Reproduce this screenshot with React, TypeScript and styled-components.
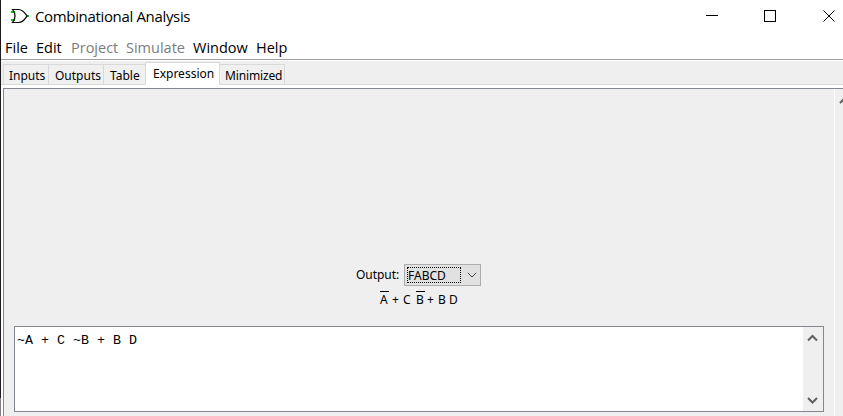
import React from "react";
import styled, { createGlobalStyle } from "styled-components";

const Global = createGlobalStyle`
  * { box-sizing: border-box; }
  body { margin: 0; overflow: hidden; background: #fff; }
`;

const Window = styled.div`
  width: 843px;
  height: 416px;
  display: flex;
  flex-direction: column;
  overflow: hidden;
  padding-left: 1px;
  background: linear-gradient(#1c1a1c 398px, #858085 398px) 0 0 / 1px 100% no-repeat #fff;
  color: #000;
  font-family: "Noto Sans", "Open Sans", sans-serif;
`;

const TitleBar = styled.header`
  height: 36px;
  flex: none;
  display: flex;
  align-items: flex-start;
  padding-left: 10px;
`;

const GateIcon = styled.svg`
  margin-top: 8px;
  width: 20px;
  height: 16px;
  flex: none;
`;

const Title = styled.h1`
  margin: 4px auto 0 4px;
  font-family: "Open Sans", sans-serif;
  font-size: 15px;
  font-weight: 400;
  line-height: 24px;
  letter-spacing: -0.34px;
  white-space: nowrap;
`;

const Controls = styled.svg`
  margin-top: 9px;
  width: 137px;
  height: 14px;
  flex: none;
`;

const MenuBar = styled.nav`
  height: 24px;
  flex: none;
  display: flex;
  border-bottom: 1px solid #a0a0a0;
  padding-left: 4px;
`;

const MenuItem = styled.span<{ $width: number; $disabled?: boolean }>`
  width: ${(p) => p.$width}px;
  flex: none;
  font-family: "Open Sans", sans-serif;
  font-size: 14.5px;
  line-height: 24px;
  white-space: nowrap;
  color: ${(p) => (p.$disabled ? "#7c7c7c" : "#000")};
`;

const TabStrip = styled.div`
  height: 24px;
  flex: none;
  display: flex;
  align-items: flex-end;
  margin-top: 1px;
  padding-left: 2px;
  background: #efefef;
  box-shadow: inset 0 -1px #d9d9d9;
`;

const Tab = styled.div<{ $width: number; $inset?: number; $active?: boolean }>`
  width: ${(p) => p.$width}px;
  height: ${(p) => (p.$active ? 23 : 21)}px;
  flex: none;
  border: 1px solid #d9d9d9;
  border-right-width: ${(p) => (p.$active ? 1 : 0)}px;
  border-bottom-color: ${(p) => (p.$active ? "#fff" : "#d9d9d9")};
  background: ${(p) => (p.$active ? "#fff" : "#f0f0f0")};
  padding-left: ${(p) => p.$inset ?? 5}px;
  font-size: 12px;
  line-height: 21px;
  white-space: nowrap;
  &:last-child {
    border-right-width: 1px;
    border-left-width: 0;
    letter-spacing: -0.15px;
  }
`;

const Page = styled.main`
  flex: 1;
  display: flex;
  margin: 3px 0 0 2px;
  border: solid #828790;
  border-width: 1px 0 0 1px;
  background: #efefef;
`;

const Content = styled.div`
  width: 831px;
  flex: none;
  display: flex;
  flex-direction: column;
  align-items: flex-start;
  padding: 175px 0 0 10px;
  border-right: 1px solid #fff;
`;

const OuterScroll = styled.svg`
  width: 8px;
  height: 30px;
  flex: none;
`;

const OutputRow = styled.div`
  display: flex;
  align-items: center;
  height: 22px;
  margin-left: 342px;
  font-size: 12px;
`;

const OutputLabel = styled.label`
  width: 48px;
  letter-spacing: -0.05px;
  line-height: 24px;
`;

const Select = styled.div`
  width: 77px;
  height: 22px;
  display: flex;
  align-items: center;
  padding-left: 2px;
  border: 1px solid #adadad;
  background: #e1e1e1;
`;

const Selected = styled.span`
  width: 54px;
  height: 16px;
  border: 1px dotted #000;
  line-height: 16px;
`;

const Chevron = styled.svg`
  width: 10px;
  height: 6px;
  margin-left: 6px;
`;

const Formula = styled.div`
  display: flex;
  margin: 4px 0 0 366px;
  height: 17px;
  font-size: 12px;
  line-height: 19px;
`;

const Term = styled.span<{ $width: number; $bar?: boolean }>`
  width: ${(p) => p.$width}px;
  white-space: nowrap;
  background: ${(p) => (p.$bar ? "linear-gradient(#000, #000) 0 1px / 9px 1px no-repeat" : "none")};
`;

const Editor = styled.div`
  display: flex;
  justify-content: space-between;
  width: 810px;
  height: 86px;
  margin-top: 19px;
  border: 1px solid #828790;
  background: #fff;
`;

const Code = styled.pre`
  margin: 6px 0 0 2px;
  font-family: "Liberation Mono", monospace;
  font-size: 13.33px;
  line-height: 16px;
`;

const EditorScroll = styled.svg`
  width: 20px;
  height: 84px;
  background: #efefef;
`;

export default function App() {
  return (
    <>
      <Global />
      <Window>
        <TitleBar>
          <GateIcon viewBox="0 0 20 16" fill="none">
            <path d="M0 4H4M0 12H4M16 8H18" stroke="#00c800" strokeWidth="2" />
            <path d="M1.5 1.5H7.5C12 1.5 14 5 16 8C14 11 12 14.5 7.5 14.5H1.5C5 10 5 6 1.5 1.5Z" stroke="#000" strokeWidth="1.2" />
          </GateIcon>
          <Title>Combinational Analysis</Title>
          <Controls viewBox="0 0 137 14" fill="none" stroke="#000">
            <path d="M0 6.5H12" />
            <rect x="58.5" y="1.5" width="11" height="11" />
            <path d="M117.5 1.5L128.5 12.5M128.5 1.5L117.5 12.5" />
          </Controls>
        </TitleBar>
        <MenuBar>
          <MenuItem $width={31}>File</MenuItem>
          <MenuItem $width={35}>Edit</MenuItem>
          <MenuItem $width={55} $disabled>Project</MenuItem>
          <MenuItem $width={67} $disabled>Simulate</MenuItem>
          <MenuItem $width={63}>Window</MenuItem>
          <MenuItem $width={40}>Help</MenuItem>
        </MenuBar>
        <TabStrip>
          <Tab $width={45}>Inputs</Tab>
          <Tab $width={55} $inset={6}>Outputs</Tab>
          <Tab $width={42} $inset={6}>Table</Tab>
          <Tab $width={75} $inset={7} $active>Expression</Tab>
          <Tab $width={65}>Minimized</Tab>
        </TabStrip>
        <Page>
          <Content>
            <OutputRow>
              <OutputLabel>Output:</OutputLabel>
              <Select>
                <Selected>FABCD</Selected>
                <Chevron viewBox="0 0 10 6" fill="none" stroke="#444">
                  <path d="M0.8 0.8L5 5L9.2 0.8" />
                </Chevron>
              </Select>
            </OutputRow>
            <Formula>
              <Term $width={12} $bar>A</Term>
              <Term $width={11}>+</Term>
              <Term $width={13}>C</Term>
              <Term $width={11} $bar>B</Term>
              <Term $width={11}>+</Term>
              <Term $width={11}>B</Term>
              <Term $width={10}>D</Term>
            </Formula>
            <Editor>
              <Code>~A + C ~B + B D</Code>
              <EditorScroll viewBox="0 0 20 84" fill="none" stroke="#606060" strokeWidth="2">
                <path d="M5 13.5L9.5 9L14 13.5M5 71L9.5 75.5L14 71" />
              </EditorScroll>
            </Editor>
          </Content>
          <OuterScroll viewBox="0 0 8 30" fill="none" stroke="#606060" strokeWidth="2">
            <path d="M5 14L9.5 9.5L14 14" />
          </OuterScroll>
        </Page>
      </Window>
    </>
  );
}
